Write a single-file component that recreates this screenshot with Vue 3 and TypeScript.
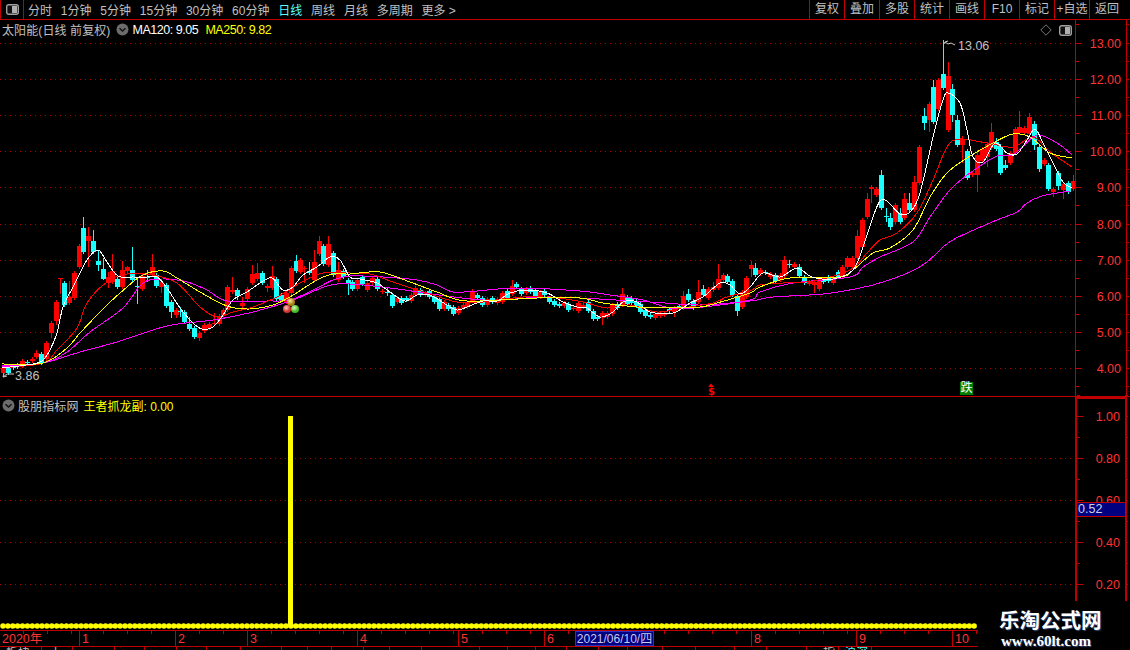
<script setup lang="ts">
type C = [number, number, number, number?, number?, string?];
interface Candle { x: number; top: number; h: number; wt: number; wb: number; color: string }

const toolbarLeft = [
  { t: '分时' }, { t: '1分钟' }, { t: '5分钟' }, { t: '15分钟' }, { t: '30分钟' }, { t: '60分钟' },
  { t: '日线', active: true }, { t: '周线' }, { t: '月线' }, { t: '多周期' }, { t: '更多 >' },
];
const toolbarRight = ['复权', '叠加', '多股', '统计', '画线', 'F10', '标记', '+自选', '返回'];

// Candles read off the chart: [x, body top, body bottom, wick top, wick bottom, colour]
const partA: C[] = [
  [8,505,520,,,'r'],[23,505,518,,,'c'],[38,500,504,,,'c'],[50,496,500,,,'c'],[65,484,498,478,,'r'],[80,485,490,,,'c'],[95,478,484,,,'r'],
  [107,458,472,450,,'r'],[122,462,490,,,'c'],[137,430,478,,,'r'],[152,370,400,,414,'r'],[167,306,362,,376,'r'],[180,235,238,235,282,'r'],
  [193,250,314,243,,'c'],[208,292,310,243,,'r'],[223,220,293,,,'r'],[238,138,202,,,'r'],[250,84,155,52,,'c'],[265,108,122,80,200,'r'],
  [280,123,155,90,,'c'],[295,183,195,150,212,'c'],[310,208,237,175,240,'c'],[323,232,250,215,265,'r'],[337,214,245,163,,'r'],[352,237,260,,,'c'],
  [367,210,262,183,,'r'],[382,202,212,197,,'r'],[395,210,240,142,,'c'],[410,258,261,232,312,'c'],[425,228,266,,,'r'],[440,231,234,210,245,'c'],
  [455,202,225,163,,'r'],[467,225,258,,,'c'],[482,246,260,,280,'r'],[497,255,318,,,'c'],[512,305,335,,355,'c'],[527,330,345,,355,'r'],
  [540,334,337,322,350,'c'],[553,336,365,,,'c'],[568,372,387,350,,'c'],[583,385,410,,,'c'],[598,400,413,,422,'r'],[611,376,392,,398,'r'],
  [626,372,385,,,'r'],[641,368,371,340,,'r'],[656,347,372,,,'r'],[670,330,347,,,'r'],[682,262,330,,,'r'],[697,270,275,230,,'r'],
  [712,270,288,,300,'c'],[727,310,317,292,330,'r'],[742,267,298,,,'r'],[755,222,248,196,,'r'],[770,220,238,190,,'r'],[785,220,250,,,'c'],
  [800,258,263,,275,'r'],[815,228,265,198,,'r'],[827,237,297,,,'c'],[842,284,300,,,'c'],[857,280,305,,,'r'],[872,205,280,,,'r'],
  [887,183,212,165,,'c'],[900,180,215,,,'r'],[913,204,207,197,250,'r'],[928,212,220,185,,'c'],[943,186,240,150,,'r'],[958,123,162,108,,'r'],
  [970,138,193,,,'c'],[985,132,195,108,,'r'],[1000,160,225,,,'c'],[1015,210,240,185,,'r'],[1030,212,232,,,'c'],[1045,240,248,,285,'c'],
];
const partB: C[] = [
  [5,155,178,,,'c'],[22,150,178,,,'r'],[37,140,162,,,'c'],[52,158,180,,,'r'],[65,143,158,,,'r'],[80,148,178,,,'c'],[95,183,187,,,'r'],
  [110,186,189,175,198,'c'],[125,195,228,,,'c'],[140,203,215,,,'r'],[153,203,218,,,'c'],[168,205,210,,,'c'],[182,195,212,,,'r'],[196,175,195,,,'r'],
  [210,180,196,,,'c'],[225,188,195,,,'r'],[238,182,202,,,'c'],[253,200,215,,,'c'],[268,208,238,,,'c'],[282,215,238,,,'r'],[295,225,236,,,'c'],
  [310,232,252,,,'c'],[325,235,250,,,'r'],[340,226,234,,,'r'],[352,218,232,,,'r'],[367,184,212,,,'r'],[382,196,205,,,'c'],[397,205,225,,,'c'],
  [412,208,226,,,'r'],[426,205,215,,,'c'],[440,208,218,,,'r'],[455,190,215,,,'r'],[470,183,204,,,'c'],[485,168,192,150,,'r'],[497,162,172,155,,'c'],
  [512,178,192,,,'c'],[527,178,190,,,'r'],[541,175,185,168,,'c'],[555,183,200,,,'c'],[570,185,200,,,'r'],[583,182,195,,,'c'],[598,205,215,,,'c'],
  [613,213,226,,,'c'],[628,222,228,,,'c'],[642,220,228,,,'r'],[655,222,240,,,'c'],[670,233,237,,,'r'],[685,218,243,,,'r'],[698,225,232,,,'r'],
  [713,216,243,,,'c'],[728,243,268,,,'c'],[742,262,268,,,'c'],[757,250,265,,285,'r'],[770,250,260,,,'r'],[785,225,252,,,'r'],[800,222,235,,,'c'],
  [815,192,226,175,,'r'],[830,200,222,,,'c'],[843,205,218,198,,'c'],[857,212,228,,,'c'],[870,222,245,,,'c'],[885,240,258,,,'c'],[900,255,262,,,'c'],
  [915,252,265,,270,'r'],[930,252,258,,,'r'],[943,250,256,,,'r'],[958,238,244,,,'c'],[972,235,246,,262,'r'],[988,228,236,,,'c'],[1000,198,233,183,,'r'],
  [1015,192,210,178,,'c'],[1030,213,233,,,'c'],[1045,186,215,150,,'r'],[1060,178,195,165,,'c'],[1075,178,205,,,'r'],[1088,170,180,155,,'r'],
  [1103,147,173,102,,'r'],[1118,135,150,,,'r'],[1132,138,155,,,'c'],[1145,153,195,,,'c'],[1160,198,243,,258,'c'],[1175,185,232,,,'r'],
];
const partC: C[] = [
  [18,714,770,,,'r'],[33,676,688,662,712,'r'],[46,684,705,670,,'c'],[61,690,702,,,'r'],[76,697,700,,,'c'],[90,703,710,,,'r'],[105,705,722,,,'c'],
  [119,705,720,,,'r'],[133,660,707,648,,'r'],[148,672,675,660,685,'c'],[163,672,682,,,'r'],[178,680,708,672,,'c'],[192,712,730,,,'c'],[207,725,732,,,'r'],
  [222,727,735,,760,'r'],[236,722,748,,,'r'],[250,720,726,,,'c'],[265,710,722,,,'c'],[278,715,730,,,'r'],[293,695,712,,,'c'],[307,682,710,,,'r'],
  [322,654,682,,,'r'],[336,654,680,,,'r'],[350,588,655,570,,'r'],[365,540,620,,,'r'],[380,478,530,458,,'r'],[394,442,447,,490,'r'],[407,447,465,,,'r'],
  [422,405,505,390,,'c'],[437,529,532,505,545,'c'],[451,534,560,520,570,'c'],[466,495,545,,,'r'],[480,518,545,505,,'c'],[493,477,535,458,,'r'],
  [508,490,510,458,,'c'],[523,426,510,408,,'r'],[537,322,430,,,'r'],[551,228,248,205,270,'c'],[566,192,240,,275,'r'],[580,142,245,120,,'c'],
  [595,120,208,,,'r'],[610,102,143,0,,'c'],[623,108,270,65,,'r'],[637,148,225,133,245,'c'],[652,240,315,225,,'c'],[667,298,315,288,370,'r'],
  [682,333,415,,,'c'],[697,400,405,,,'r'],[710,345,405,330,455,'r'],[725,328,362,,,'r'],[740,312,350,,380,'r'],[753,275,325,250,,'r'],
  [767,305,328,295,,'c'],[781,318,398,,,'c'],[795,375,384,360,,'c'],[810,340,368,,,'r'],[825,268,340,,,'r'],[838,260,280,212,,'r'],[853,265,278,,,'r'],
  [868,232,282,220,,'r'],[882,252,315,243,330,'c'],[897,320,386,,395,'c'],[911,360,372,,,'r'],[925,375,447,,452,'c'],[940,448,456,,470,'r'],
  [955,398,438,,450,'c'],[970,432,450,,478,'r'],[984,430,455,422,,'c'],[998,422,448,405,,'r'],
];

function build(rows: C[], ox: number, oy: number): Candle[] {
  return rows.map(([zx, t, b, wt, wb, k]) => {
    const top = Math.round(oy + t / 3);
    const bottom = Math.round(oy + b / 3);
    return {
      x: Math.round(ox + zx / 3),
      top,
      h: Math.max(1, bottom - top),
      wt: wt === undefined ? top - 2 : Math.round(oy + wt / 3),
      wb: wb === undefined ? bottom + 2 : Math.round(oy + wb / 3),
      color: k === 'r' ? '#ff0000' : '#1cffff',
    };
  });
}
const candles: Candle[] = [
  ...build(partA, 0, 200),
  ...build(partB, 350, 230),
  ...build(partC, 740, 40),
];

function smooth(p: number[][]): string {
  let d = `M${p[0][0]} ${p[0][1]}`;
  for (let i = 0; i < p.length - 1; i++) {
    const a = p[Math.max(0, i - 1)], b = p[i], c = p[i + 1], e = p[Math.min(p.length - 1, i + 2)];
    const c1x = b[0] + (c[0] - a[0]) / 6, c1y = b[1] + (c[1] - a[1]) / 6;
    const c2x = c[0] - (e[0] - b[0]) / 6, c2y = c[1] - (e[1] - b[1]) / 6;
    d += `C${c1x.toFixed(1)} ${c1y.toFixed(1)} ${c2x.toFixed(1)} ${c2y.toFixed(1)} ${c[0]} ${c[1]}`;
  }
  return d;
}

const averages = [
  { color: '#ff00ff', pts: [[2,367],[43,363],[80,352],[117,342],[167,326],[213,320],[253,312],[293,300],[327,286],[350,284],[390,288],[483,300],[550,297],[650,302],[700,305],[750,301],[773,297],[823,294],[860,288],[883,282],[910,272],[927,262],[948,243],[967,233],[997,220],[1017,212],[1027,203],[1042,196],[1070,191]] },
  { color: '#ff00ff', pts: [[2,366],[43,363],[67,352],[90,332],[123,308],[143,283],[163,279],[187,282],[207,290],[227,301],[267,301],[290,300],[313,290],[333,280],[350,276],[383,277],[417,280],[437,285],[453,292],[477,291],[517,288],[580,291],[610,295],[643,300],[670,308],[693,308],[750,300],[760,292],[793,283],[850,277],[863,267],[880,257],[913,242],[930,217],[950,190],[970,173],[997,156],[1013,155],[1033,137],[1043,136],[1060,145],[1072,155]] },
  { color: '#ff0000', pts: [[2,368],[43,363],[57,350],[77,328],[87,303],[107,282],[127,274],[153,275],[177,283],[200,307],[217,317],[233,312],[253,307],[277,297],[300,283],[323,273],[350,273],[370,274],[393,282],[427,293],[457,302],[483,302],[523,297],[557,298],[583,302],[607,308],[630,305],[657,312],[683,308],[713,303],[727,297],[750,291],[760,285],[783,283],[813,281],[850,270],[867,253],[880,240],[897,233],[917,213],[933,180],[947,147],[960,139],[987,143],[1013,147],[1033,137],[1050,152],[1072,167]] },
  { color: '#ffff00', pts: [[2,364],[43,363],[67,348],[80,333],[107,305],[127,287],[143,275],[163,271],[177,278],[200,292],[227,306],[250,309],[273,305],[290,297],[317,280],[333,274],[350,274],[380,272],[410,282],[437,292],[467,301],[537,298],[580,298],[603,303],[637,307],[663,308],[700,307],[717,303],[750,293],[760,287],[790,278],[840,277],[853,270],[873,253],[890,248],[913,230],[930,197],[947,173],[967,158],[993,143],[1013,134],[1030,137],[1050,153],[1072,158]] },
  { color: '#ffffff', pts: [[2,368],[33,364],[43,360],[50,350],[57,333],[63,307],[73,287],[87,260],[98,250],[107,262],[118,276],[133,277],[147,277],[157,277],[167,288],[180,308],[193,323],[202,329],[213,327],[223,315],[233,300],[247,292],[260,283],[272,278],[283,290],[293,287],[303,275],[317,267],[330,257],[340,260],[350,277],[360,279],[377,283],[390,292],[405,301],[417,295],[430,295],[447,305],[457,310],[467,307],[483,301],[497,301],[510,293],[527,290],[547,293],[563,302],[577,307],[587,308],[600,317],[613,312],[623,302],[637,302],[650,312],[673,313],[690,303],[703,297],[720,283],[730,285],[740,294],[750,287],[763,273],[780,277],[797,268],[812,277],[833,279],[853,270],[863,247],[873,217],[880,201],[887,201],[900,214],[910,212],[920,193],[933,137],[943,100],[948,93],[960,103],[967,130],[973,157],[983,162],[995,143],[1007,153],[1017,154],[1027,140],[1035,129],[1043,143],[1053,163],[1063,182],[1072,188]] },
].map((m) => ({ color: m.color, d: smooth(m.pts) }));

const priceY = (p: number) => Math.round(42.5 + 36.2 * (13 - p));
const mainGrid = [13, 12, 11, 10, 9, 8, 7, 6, 5, 4].map((p) => ({ y: priceY(p), label: p.toFixed(2) }));
const mainTicks: { y: number; major: boolean }[] = [];
for (let p = 13.5; p >= 3.5; p -= 0.5) mainTicks.push({ y: priceY(p) - 20, major: Number.isInteger(p) });

const subY = (v: number) => Math.round(416 + (1 - v) * 210);
const subLabels = [1, 0.8, 0.6, 0.4, 0.2].map((v) => ({ y: subY(v), label: v.toFixed(2) }));
const subGrid = [0.8, 0.6, 0.4, 0.2].map(subY);
const subTicks: { y: number; major: boolean }[] = [];
for (let i = 11; i >= 1; i--) subTicks.push({ y: subY(i / 10) - 397, major: i % 2 === 0 });

const dots: number[] = [];
for (let x = 3; x < 978; x += 4.88) dots.push(Number(x.toFixed(1)));

const months = [
  { t: '2020年', w: 79 }, { t: '1', w: 96 }, { t: '2', w: 72 }, { t: '3', w: 110 }, { t: '4', w: 101 },
  { t: '5', w: 86 }, { t: '6', w: 207 }, { t: '8', w: 105 }, { t: '9', w: 96 }, { t: '10', w: 178 },
];
const stripEdges = [0,42,73,115,145,177,207,241,282,308,332,364,390,422,480,508,536,567,599,628,663,696,735,767,807,839,872,1130];
const stripText: Record<number, { t: string; pad: number }> = {
  0: { t: '板块', pad: 6 }, 1: { t: '上证', pad: 8 }, 24: { t: '指数', pad: 16 }, 25: { t: '沪深', pad: 5 },
};
const strip = stripEdges.slice(1).map((e, i) => ({
  w: e - stripEdges[i],
  t: stripText[i]?.t ?? '',
  pad: stripText[i]?.pad ?? 0,
  cyan: i === 25,
}));
</script>

<template>
  <div class="terminal">
    <header class="toolbar">
      <div class="toggle-cell">
        <svg width="13" height="11" viewBox="0 0 13 11"><rect x="0.7" y="0.7" width="11.6" height="9.6" rx="2" fill="#111" stroke="#a0a0a0" stroke-width="1.4" /><rect x="6" y="2" width="5" height="7" fill="#b0b0b0" /></svg>
      </div>
      <nav class="periods">
        <span v-for="item in toolbarLeft" :key="item.t" :class="{ active: item.active }">{{ item.t }}</span>
      </nav>
      <nav class="actions">
        <span v-for="b in toolbarRight" :key="b" class="action">{{ b }}</span>
      </nav>
    </header>

    <section class="pane main-pane">
      <div class="plot">
        <svg class="canvas" width="1075" height="376" viewBox="0 20 1075 376">
          <g shape-rendering="crispEdges">
            <line v-for="g in mainGrid" :key="g.y" x1="0" x2="1075" :y1="g.y + 0.5" :y2="g.y + 0.5" class="grid" />
            <g v-for="(c, i) in candles" :key="i" :fill="c.color" :stroke="c.color">
              <line :x1="c.x + 0.5" :x2="c.x + 0.5" :y1="c.wt" :y2="c.wb" stroke-width="1" />
              <rect :x="c.x - 2" :y="c.top" width="5" :height="c.h" stroke="none" />
            </g>
            <path v-for="(m, i) in averages" :key="i" :d="m.d" :stroke="m.color" fill="none" stroke-width="1" />
          </g>
          <path d="M955 45 L951 43 L948 44 L945 42 L944 44 M945 42 L948 41" stroke="#c8c8c8" fill="none" />
          <path d="M14 374 H7 L3 377 M3 377 L4 373 M3 377 L7 376" stroke="#c8c8c8" fill="none" />
          <defs>
            <radialGradient id="ballY" cx="0.4" cy="0.35"><stop offset="0" stop-color="#ffe9a0" /><stop offset="1" stop-color="#a87a10" /></radialGradient>
            <radialGradient id="ballR" cx="0.4" cy="0.35"><stop offset="0" stop-color="#ffc8c0" /><stop offset="1" stop-color="#d03028" /></radialGradient>
            <radialGradient id="ballG" cx="0.4" cy="0.35"><stop offset="0" stop-color="#d8ffc0" /><stop offset="1" stop-color="#48b820" /></radialGradient>
          </defs>
          <circle cx="291" cy="302" r="4" fill="url(#ballY)" />
          <circle cx="287" cy="309" r="4" fill="url(#ballR)" />
          <circle cx="295" cy="309" r="4" fill="url(#ballG)" />
          <path d="M711 383.5 L714 387 H708 Z" fill="#ff0000" />
          <rect x="960" y="382" width="13" height="13" fill="#007f00" />
        </svg>
        <div class="legend">
          <span class="legend-name">太阳能(日线 前复权)</span>
          <svg class="chev chev-name" width="13" height="13" viewBox="0 0 13 13"><circle cx="6.5" cy="6.5" r="6" fill="#6c6c6c" /><path d="M3.5 5.2 L6.5 8 L9.5 5.2" stroke="#111" stroke-width="1.4" fill="none" /></svg>
          <span class="ma white">MA120: 9.05</span>
          <span class="ma yellow">MA250: 9.82</span>
        </div>
        <div class="corner">
          <svg width="12" height="12" viewBox="0 0 12 12"><path d="M6 0.8 L11.2 6 L6 11.2 L0.8 6 Z" fill="none" stroke="#777" /></svg>
          <svg width="13" height="11" viewBox="0 0 13 11"><rect x="0.7" y="0.7" width="11.6" height="9.6" rx="2" fill="#111" stroke="#a0a0a0" stroke-width="1.4" /><rect x="6" y="2" width="5" height="7" fill="#b0b0b0" /></svg>
        </div>
        <span class="note note-high">13.06</span>
        <span class="note note-low">3.86</span>
        <span class="sig-dollar">$</span>
        <span class="sig-drop">跌</span>
      </div>
      <div class="axis">
        <i v-for="t in mainTicks" :key="t.y" class="tick" :class="{ major: t.major }" :style="{ top: t.y + 'px' }"></i>
        <i v-for="t in mainTicks" :key="'r' + t.y" class="tick-right" :style="{ top: t.y + 'px' }"></i>
        <span v-for="g in mainGrid" :key="g.y" class="axis-label" :style="{ top: g.y - 19 + 'px' }">{{ g.label }}</span>
      </div>
    </section>

    <section class="pane sub-pane">
      <div class="plot">
        <svg class="canvas" width="1075" height="233" viewBox="0 397 1075 233">
          <g shape-rendering="crispEdges">
            <line v-for="y in subGrid" :key="y" x1="0" x2="1075" :y1="y + 0.5" :y2="y + 0.5" class="grid" />
            <rect x="288" y="416" width="5" height="211" fill="#ffff00" />
          </g>
          <circle v-for="x in dots" :key="x" :cx="x" cy="626" r="2.8" fill="#ffff00" />
        </svg>
        <div class="legend sub-legend">
          <svg class="chev" width="13" height="13" viewBox="0 0 13 13"><circle cx="6.5" cy="6.5" r="6" fill="#6c6c6c" /><path d="M3.5 5.2 L6.5 8 L9.5 5.2" stroke="#111" stroke-width="1.4" fill="none" /></svg>
          <span class="legend-name">股朋指标网</span>
          <span class="yellow">王者抓龙副: 0.00</span>
        </div>
      </div>
      <div class="axis sub-axis">
        <i v-for="t in subTicks" :key="t.y" class="tick" :class="{ major: t.major }" :style="{ top: t.y + 'px' }"></i>
        <i v-for="t in subTicks" :key="'r' + t.y" class="tick-right" :style="{ top: t.y + 'px' }"></i>
        <span v-for="g in subLabels" :key="g.y" class="axis-label" :style="{ top: g.y - 396 + 'px' }">{{ g.label }}</span>
        <span class="cursor-value">0.52</span>
      </div>
    </section>

    <footer class="dates">
      <span v-for="m in months" :key="m.t" class="month" :style="{ width: m.w + 'px' }">{{ m.t }}</span>
      <span class="cursor-date">2021/06/10/四</span>
    </footer>
    <div class="strip">
      <span
        v-for="(s, i) in strip"
        :key="i"
        class="strip-cell"
        :class="{ cyan: s.cyan }"
        :style="{ width: s.w + 'px', paddingLeft: s.pad + 'px' }"
      >{{ s.t }}</span>
    </div>

    <aside class="stamp">
      <strong>乐淘公式网</strong>
      <em>www.60lt.com</em>
    </aside>
  </div>
</template>

<style scoped>
.terminal {
  position: relative;
  width: 1130px;
  height: 650px;
  overflow: hidden;
  display: flex;
  flex-direction: column;
  background: #000;
  color: #c0c0c0;
  font-family: "Liberation Sans", "Noto Sans CJK SC", sans-serif;
  font-size: 12px;
}
.toolbar {
  display: flex;
  align-items: center;
  flex: none;
  height: 20px;
  box-sizing: border-box;
  border-bottom: 1px solid #c00000;
}
.toggle-cell {
  display: flex;
  align-items: center;
  justify-content: center;
  width: 24px;
  height: 19px;
  box-sizing: border-box;
  border-left: 1px solid #c00000;
  border-right: 1px solid #c00000;
}
.periods {
  display: flex;
  gap: 8.8px;
  margin-left: 4px;
  white-space: nowrap;
}
.periods .active { color: #55ffff; }
.actions {
  display: flex;
  margin-left: auto;
  height: 19px;
}
.action {
  width: 35px;
  box-sizing: border-box;
  border-left: 1px solid #c00000;
  text-align: center;
  line-height: 19px;
}
.action:last-child {
  width: 41px;
  padding-right: 6px;
}
.pane {
  display: flex;
  flex: none;
}
.main-pane {
  height: 377px;
  box-sizing: border-box;
  border-bottom: 1px solid #c00000;
}
.sub-pane { height: 233px; }
.plot {
  position: relative;
  width: 1075px;
  flex: none;
}
.canvas { display: block; }
.grid {
  stroke: #a80000;
  stroke-width: 1;
  stroke-dasharray: 1 4;
}
.legend {
  position: absolute;
  left: 2px;
  top: 1px;
  display: flex;
  align-items: center;
  gap: 4px;
  height: 17px;
  white-space: nowrap;
}
.legend-name { letter-spacing: 0.1px; }
.legend .ma {
  font-size: 12.5px;
  letter-spacing: -0.45px;
}
.legend .ma.white { margin-right: 3px; }
.white { color: #fff; }
.yellow { color: #ffff00; }
.chev { flex: none; }
.chev-name { margin-left: 2px; margin-right: -1px; }
.sub-legend { top: 0; left: 2px; }
.sub-legend .legend-name { margin-left: -1px; margin-right: 1px; }
.corner {
  position: absolute;
  right: 3px;
  top: 4px;
  display: flex;
  align-items: center;
  gap: 7px;
}
.note {
  position: absolute;
  font-size: 12.5px;
  color: #c0c0c0;
  line-height: 14px;
}
.note-high { left: 958px; top: 19px; }
.note-low { left: 15px; top: 349px; }
.sig-dollar {
  position: absolute;
  left: 708px;
  top: 366px;
  font: bold 10px/12px "DejaVu Sans", sans-serif;
  color: #ff0000;
}
.sig-drop {
  position: absolute;
  left: 960px;
  top: 362px;
  width: 13px;
  height: 13px;
  line-height: 13px;
  text-align: center;
  font-size: 12px;
  color: #fff;
}
.axis {
  position: relative;
  width: 52px;
  flex: none;
  box-sizing: border-box;
  border-left: 1px solid #c00000;
  border-right: 1px solid #c00000;
}
.sub-axis {
  border-left-width: 2px;
  border-top: 2px solid #c00000;
  border-right-width: 2px;
}
.tick {
  position: absolute;
  left: 0;
  width: 3px;
  height: 1px;
  background: #c00000;
}
.tick.major { width: 6px; }
.tick-right {
  position: absolute;
  left: 100%;
  width: 3px;
  height: 1px;
  background: #c00000;
}
.sub-axis .tick, .sub-axis .tick-right { margin-top: -2px; }
.axis-label {
  position: absolute;
  right: 5px;
  transform: translateY(-50%);
  color: #ff3232;
  font-size: 12.5px;
  line-height: 14px;
}
.sub-axis .axis-label { margin-top: -2px; }
.cursor-value {
  position: absolute;
  left: 0;
  right: 0;
  top: 103px;
  height: 15px;
  box-sizing: border-box;
  border: 1px solid #c00000;
  border-left: none;
  border-right: none;
  background: #000080;
  color: #d0d0e0;
  font-size: 12.5px;
  line-height: 13px;
  padding-left: 1px;
}
.dates {
  position: relative;
  display: flex;
  flex: none;
  height: 17px;
  box-sizing: border-box;
  border-top: 1px solid #c00000;
  border-bottom: 1px solid #c00000;
}
.month {
  box-sizing: border-box;
  flex: none;
  padding-left: 2px;
  border-left: 1px solid #c00000;
  color: #ff3232;
  font-size: 12.5px;
  line-height: 16px;
  background: repeating-linear-gradient(90deg, transparent 0 23px, #c00000 23px 24px) top left / 100% 3px no-repeat;
}
.month:first-child { border-left: none; }
.cursor-date {
  position: absolute;
  left: 575px;
  top: 0;
  width: 79px;
  height: 15px;
  box-sizing: border-box;
  border: 1px solid #3030c0;
  background: #000080;
  color: #c8c8f0;
  text-align: center;
  font-size: 12px;
  line-height: 14px;
  white-space: nowrap;
}
.strip {
  display: flex;
  flex: none;
  height: 3px;
  overflow: hidden;
}
.strip-cell {
  flex: none;
  box-sizing: border-box;
  border-right: 1px solid #c00000;
  font-size: 12px;
  line-height: 12px;
  color: #c0c0c0;
}
.strip-cell.cyan { color: #55ffff; }
.stamp {
  position: absolute;
  left: 978px;
  top: 601px;
  width: 152px;
  height: 49px;
  background: #000;
  display: flex;
  flex-direction: column;
  align-items: flex-start;
  padding: 8px 0 0 21px;
  box-sizing: border-box;
  color: #fff;
}
.stamp strong {
  font-size: 20.5px;
  line-height: 23px;
  font-weight: 700;
  white-space: nowrap;
  text-shadow: 1px 1px 1px #304878;
}
.stamp em {
  font: normal 700 15px/15px "Liberation Serif", serif;
  margin-top: 2px;
  margin-left: 2px;
  text-shadow: 1px 1px 1px #304878;
}
</style>

<style>
html, body { margin: 0; background: #000; }
</style>
